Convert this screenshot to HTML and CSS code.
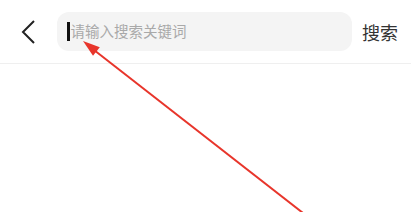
FILE: index.html
```html
<!DOCTYPE html>
<html lang="zh">
<head>
<meta charset="utf-8">
<link rel="stylesheet" href="styles.css">
</head>
<body>
<div class="page">
  <header class="header">
    <div class="back">
      <svg width="16" height="24" viewBox="0 0 16 24"><path d="M13 1 L2 12 L13 23" fill="none" stroke="#222" stroke-width="2"/></svg>
    </div>
    <div class="search">
      <span class="caret"></span>
      <span class="placeholder">请输入搜索关键词</span>
    </div>
    <div class="action">搜索</div>
  </header>
  <svg class="arrow" width="411" height="212" viewBox="0 0 411 212">
    <line x1="94" y1="50" x2="303" y2="213" stroke="#e8352b" stroke-width="2"/>
    <polygon points="83,41 93,55.8 99.8,47.2" fill="#e8352b"/>
  </svg>
</div>
</body>
</html>
```
FILE: styles.css
```css
html, body {
  margin: 0;
  padding: 0;
  background: #fff;
}
.page {
  position: relative;
  width: 411px;
  height: 212px;
  overflow: hidden;
  font-family: "Noto Sans CJK SC", "Noto Sans", sans-serif;
}
.header {
  display: flex;
  align-items: center;
  box-sizing: border-box;
  height: 64px;
  border-bottom: 1px solid #efefef;
}
.back {
  width: 57px;
  box-sizing: border-box;
  padding-left: 21px;
  display: flex;
  align-items: center;
}
.search {
  width: 295px;
  height: 39px;
  background: #f4f4f4;
  border-radius: 12px;
  display: flex;
  align-items: center;
  padding-left: 10px;
  box-sizing: border-box;
}
.caret {
  width: 2.5px;
  height: 19px;
  background: #111;
  margin-right: 1px;
}
.placeholder {
  font-size: 14.5px;
  color: #a9a9a9;
  line-height: 1;
}
.action {
  margin-left: 10px;
  font-size: 18px;
  color: #333;
  line-height: 1;
}
.arrow {
  position: absolute;
  left: 0;
  top: 0;
  pointer-events: none;
}
```
